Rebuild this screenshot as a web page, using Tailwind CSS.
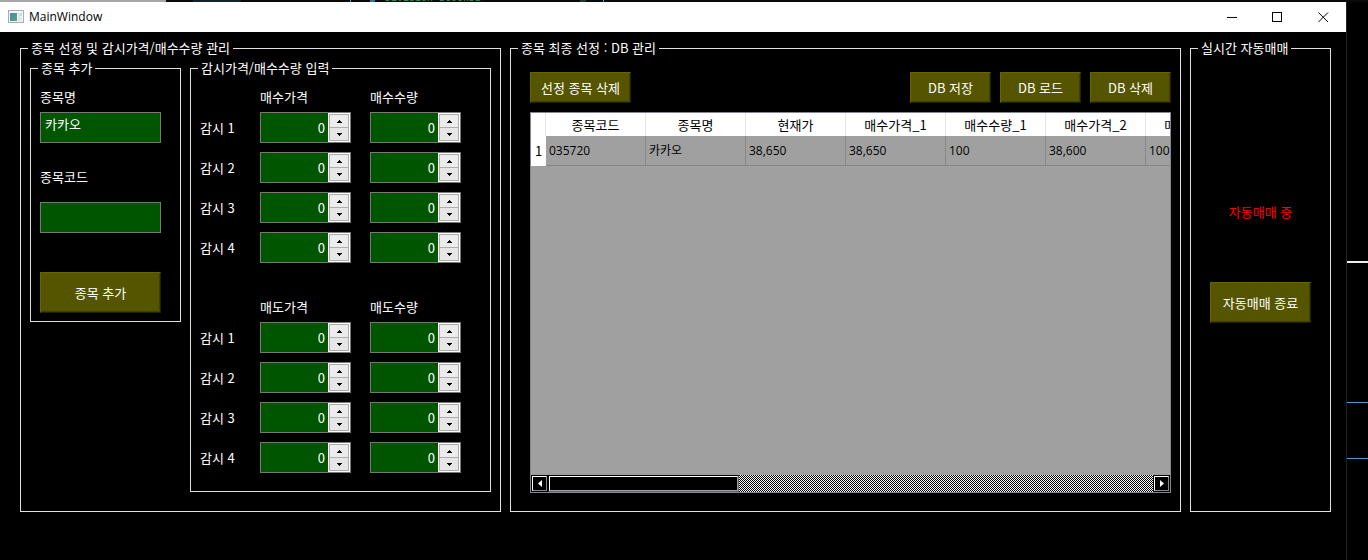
<!DOCTYPE html>
<html lang="ko">
<head>
<meta charset="utf-8">
<meta name="viewport" content="width=device-width, initial-scale=1">
<title>MainWindow</title>
<script src="https://cdn.jsdelivr.net/npm/@tailwindcss/browser@4"></script>
</head>
<body class="flex h-screen flex-col overflow-hidden bg-black font-['Noto_Sans_CJK_KR',sans-serif] text-[13px] leading-5 text-white">

<!-- Edge of the editor behind the window -->
<div class="flex h-[2px] shrink-0 overflow-hidden bg-[#0a0a0a]" aria-hidden="true">
  <div class="w-[166px] bg-[#a6a6a6]"></div>
  <div class="ml-[27px] w-[48px] bg-[#12222c]"></div>
  <div class="ml-[109px] w-px bg-[#4f9db8]"></div>
  <div class="ml-[19px] w-[5px] bg-[#2f6fa8]"></div>
  <div class="ml-[10px] flex w-[98px] items-end font-['Liberation_Mono',monospace] text-[10px] leading-[6px] whitespace-nowrap text-[#2f9e63]">Division StockDB</div>
  <div class="ml-[97px] w-[6px] bg-[#1d3a2a]"></div>
  <div class="ml-[17px] w-px bg-[#4f9db8]"></div>
</div>

<div class="flex min-h-0 flex-1">
  <div class="flex min-w-0 flex-1 flex-col">
    <header class="flex h-[30px] shrink-0 items-center bg-white text-black">
      <svg class="ml-2 h-[14px] w-4" viewBox="0 0 16 14" aria-hidden="true">
        <defs><linearGradient id="pane" x1="0" y1="0" x2="1" y2="1"><stop offset="0" stop-color="#4a86b5"/><stop offset="1" stop-color="#55a878"/></linearGradient></defs>
        <rect x="0.5" y="0.5" width="15" height="12" fill="#f4f5f7" stroke="#a9adb3"/>
        <rect x="2" y="3" width="7" height="8" fill="url(#pane)"/>
        <rect x="10" y="3" width="2" height="8" fill="#dfe3e6"/>
        <rect x="12" y="3" width="2" height="3" fill="#c8ddd2"/>
        <rect x="12" y="7" width="2" height="4" fill="#e6e8ea"/>
      </svg>
      <h1 class="ml-[5px] flex-1 font-['Open_Sans',sans-serif] text-[12px]">MainWindow</h1>
      <button class="flex h-full w-[46px] items-center justify-center" aria-label="Minimize"><svg class="h-[11px] w-[11px]" viewBox="0 0 11 11"><path d="M0 5.5H10" stroke="#000" fill="none"/></svg></button>
      <button class="flex h-full w-[45px] items-center justify-center" aria-label="Maximize"><svg class="h-[11px] w-[11px]" viewBox="0 0 11 11"><rect x=".5" y=".5" width="9" height="9" stroke="#000" fill="none"/></svg></button>
      <button class="flex h-full w-[46px] items-center justify-center" aria-label="Close"><svg class="h-[11px] w-[11px]" viewBox="0 0 11 11"><path d="M.5 .5L10 10M10 .5L.5 10" stroke="#000" fill="none"/></svg></button>
    </header>

    <main class="flex min-h-0 flex-1 gap-[9px] pt-2 pr-[15px] pb-12 pl-5">

      <fieldset class="w-[481px] shrink-0 border border-[#e0e0e0] pt-1 pr-[9px] pl-[9px]">
        <legend class="-ml-[2px] px-[3px] leading-4">종목 선정 및 감시가격/매수수량 관리</legend>
        <div class="flex items-start gap-[9px]">
          <fieldset class="w-[151px] border border-[#e0e0e0] px-[9px] pt-[11px] pb-2">
            <legend class="-ml-[2px] px-[3px] leading-4">종목 추가</legend>
            <div class="flex w-[121px] flex-col">
              <label for="name">종목명</label>
              <input id="name" type="text" value="카카오" class="mt-[5px] h-[31px] border border-[#787878] bg-[#005500] px-1 pb-2">
              <label for="code" class="mt-6">종목코드</label>
              <input id="code" type="text" class="mt-[15px] h-[31px] border border-[#787878] bg-[#005500] px-1 pb-2">
              <button class="mt-[39px] h-[41px] border border-t-[#666600] border-r-[#222200] border-b-[#222200] border-l-[#666600] bg-[#555500] shadow-[inset_-1px_-1px_#3f3f00]">종목 추가</button>
            </div>
          </fieldset>

          <fieldset class="w-[301px] border border-[#e0e0e0] pt-[11px] pr-[29px] pb-[18px] pl-[9px]">
            <legend class="-ml-[2px] px-[3px] leading-4">감시가격/매수수량 입력</legend>
            <div id="buy" class="grid grid-cols-[41px_91px_91px] gap-x-[19px] gap-y-[9px]">
              <span></span><span class="-mb-1">매수가격</span><span class="-mb-1">매수수량</span>
            </div>
            <div id="sell" class="mt-[34px] grid grid-cols-[41px_91px_91px] gap-x-[19px] gap-y-[9px]">
              <span></span><span class="-mb-1">매도가격</span><span class="-mb-1">매도수량</span>
            </div>
          </fieldset>
        </div>
      </fieldset>

      <fieldset class="flex min-w-0 flex-1 flex-col border border-[#e0e0e0] pt-4 pr-[9px] pb-[18px] pl-[19px]">
        <legend class="-ml-3 px-[3px] leading-4">종목 최종 선정 : DB 관리</legend>
        <div class="flex gap-[9px]">
          <button class="mr-auto h-[31px] w-[101px] border border-t-[#666600] border-r-[#222200] border-b-[#222200] border-l-[#666600] bg-[#555500] shadow-[inset_-1px_-1px_#3f3f00]">선정 종목 삭제</button>
          <button class="h-[31px] w-[81px] border border-t-[#666600] border-r-[#222200] border-b-[#222200] border-l-[#666600] bg-[#555500] shadow-[inset_-1px_-1px_#3f3f00]">DB 저장</button>
          <button class="h-[31px] w-[81px] border border-t-[#666600] border-r-[#222200] border-b-[#222200] border-l-[#666600] bg-[#555500] shadow-[inset_-1px_-1px_#3f3f00]">DB 로드</button>
          <button class="h-[31px] w-[81px] border border-t-[#666600] border-r-[#222200] border-b-[#222200] border-l-[#666600] bg-[#555500] shadow-[inset_-1px_-1px_#3f3f00]">DB 삭제</button>
        </div>
        <div class="mt-[9px] flex min-h-0 flex-1 flex-col border border-[#828790] bg-[#a0a0a0]">
          <div class="min-h-0 flex-1 overflow-hidden bg-[linear-gradient(#fff,#fff)] bg-[length:100%_23px] bg-no-repeat">
            <table class="w-[715px] table-fixed border-separate border-spacing-0 text-black">
              <thead>
                <tr class="h-[23px] bg-white [&>th]:border-r [&>th]:border-[#e5e5e5] [&>th]:p-0 [&>th]:font-normal">
                  <th class="w-[15px]"></th><th>종목코드</th><th>종목명</th><th>현재가</th><th>매수가격_1</th><th>매수수량_1</th><th>매수가격_2</th><th>매수수량_2</th>
                </tr>
              </thead>
              <tbody>
                <tr class="h-[30px] font-['Open_Sans','Noto_Sans_CJK_KR',sans-serif] text-[12px] [&>td]:border-r [&>td]:border-b [&>td]:border-[#878787] [&>td]:py-0 [&>td]:pr-0 [&>td]:pl-[3px]">
                  <th class="bg-white p-0 font-['Noto_Sans_CJK_KR',sans-serif] text-[13px] font-normal">1</th><td>035720</td><td>카카오</td><td>38,650</td><td>38,650</td><td>100</td><td>38,600</td><td>100</td>
                </tr>
              </tbody>
            </table>
          </div>
          <div class="flex h-[17px] bg-[conic-gradient(#fff_25%,#000_0_50%,#fff_0_75%,#000_0)] bg-[length:2px_2px]">
            <button class="flex w-[17px] border border-black bg-black" aria-label="Scroll left"><span class="flex h-full flex-1 items-center justify-center border border-t-white border-r-[#8a8a8a] border-b-[#8a8a8a] border-l-white"><svg class="h-[7px] w-[4px]" viewBox="0 0 4 7"><path d="M4 0V7L0 3.5Z" fill="#fff"/></svg></span></button>
            <div class="w-[191px] border border-t-black border-r-[#666] border-b-[#666] border-l-black bg-black"><div class="h-full border border-t-white border-r-[#a0a0a0] border-b-[#a0a0a0] border-l-white"></div></div>
            <button class="ml-auto flex w-[17px] border border-black bg-black" aria-label="Scroll right"><span class="flex h-full flex-1 items-center justify-center border border-t-white border-r-[#8a8a8a] border-b-[#8a8a8a] border-l-white"><svg class="h-[7px] w-[4px]" viewBox="0 0 4 7"><path d="M0 0V7L4 3.5Z" fill="#fff"/></svg></span></button>
          </div>
        </div>
      </fieldset>

      <fieldset class="w-[141px] shrink-0 border border-[#e0e0e0] px-[9px]">
        <legend class="-ml-[2px] px-[3px] leading-4">실시간 자동매매</legend>
        <div class="flex flex-col items-center pt-[146px]">
          <p class="text-[#ff0000]">자동매매 중</p>
          <button class="mt-[60px] h-[41px] w-[101px] border border-t-[#666600] border-r-[#222200] border-b-[#222200] border-l-[#666600] bg-[#555500] shadow-[inset_-1px_-1px_#3f3f00]">자동매매 종료</button>
        </div>
      </fieldset>
    </main>
  </div>

  <!-- Desktop strip to the right of the window -->
  <div class="flex w-[22px] shrink-0 flex-col border-l border-[#222]" aria-hidden="true">
    <div class="mt-[259px] h-[2px] bg-[#eee]"></div>
    <div class="mt-[139px] h-px bg-[#4f9db8]"></div>
    <div class="mt-[55px] h-px bg-[#4f9db8]"></div>
  </div>
</div>

<template id="spin">
  <div class="flex h-[31px] border border-[#787878] bg-[#005500]">
    <input type="text" inputmode="numeric" value="0" class="w-[67px] pr-[3px] text-right">
    <div class="flex flex-1 flex-col bg-white p-px">
      <button class="flex h-[14px] items-center justify-center border border-[#adadad] bg-[#ececec]" aria-label="증가"><svg class="h-[3px] w-[5px]" viewBox="0 0 5 3" shape-rendering="crispEdges"><path d="M2 0h1v1h1v1h1v1H0V2h1V1h1Z" fill="#000"/></svg></button>
      <button class="-mt-px flex h-[14px] items-center justify-center border border-[#adadad] bg-[#e6e6e6]" aria-label="감소"><svg class="h-[3px] w-[5px]" viewBox="0 0 5 3" shape-rendering="crispEdges"><path d="M0 0h5v1H4v1H3v1H2V2H1V1H0Z" fill="#000"/></svg></button>
    </div>
  </div>
</template>
<script>
  const spin = document.getElementById('spin');
  for (const [id, kinds] of [['buy', ['매수가격', '매수수량']], ['sell', ['매도가격', '매도수량']]]) {
    const grid = document.getElementById(id);
    for (let i = 1; i <= 4; i++) {
      const label = document.createElement('label');
      label.textContent = '감시 ' + i;
      label.htmlFor = id + '-0-' + i;
      label.className = 'self-center';
      grid.append(label);
      kinds.forEach((kind, k) => {
        const box = spin.content.cloneNode(true);
        const input = box.querySelector('input');
        input.id = id + '-' + k + '-' + i;
        input.setAttribute('aria-label', kind + ' ' + i);
        grid.append(box);
      });
    }
  }
</script>
</body>
</html>
